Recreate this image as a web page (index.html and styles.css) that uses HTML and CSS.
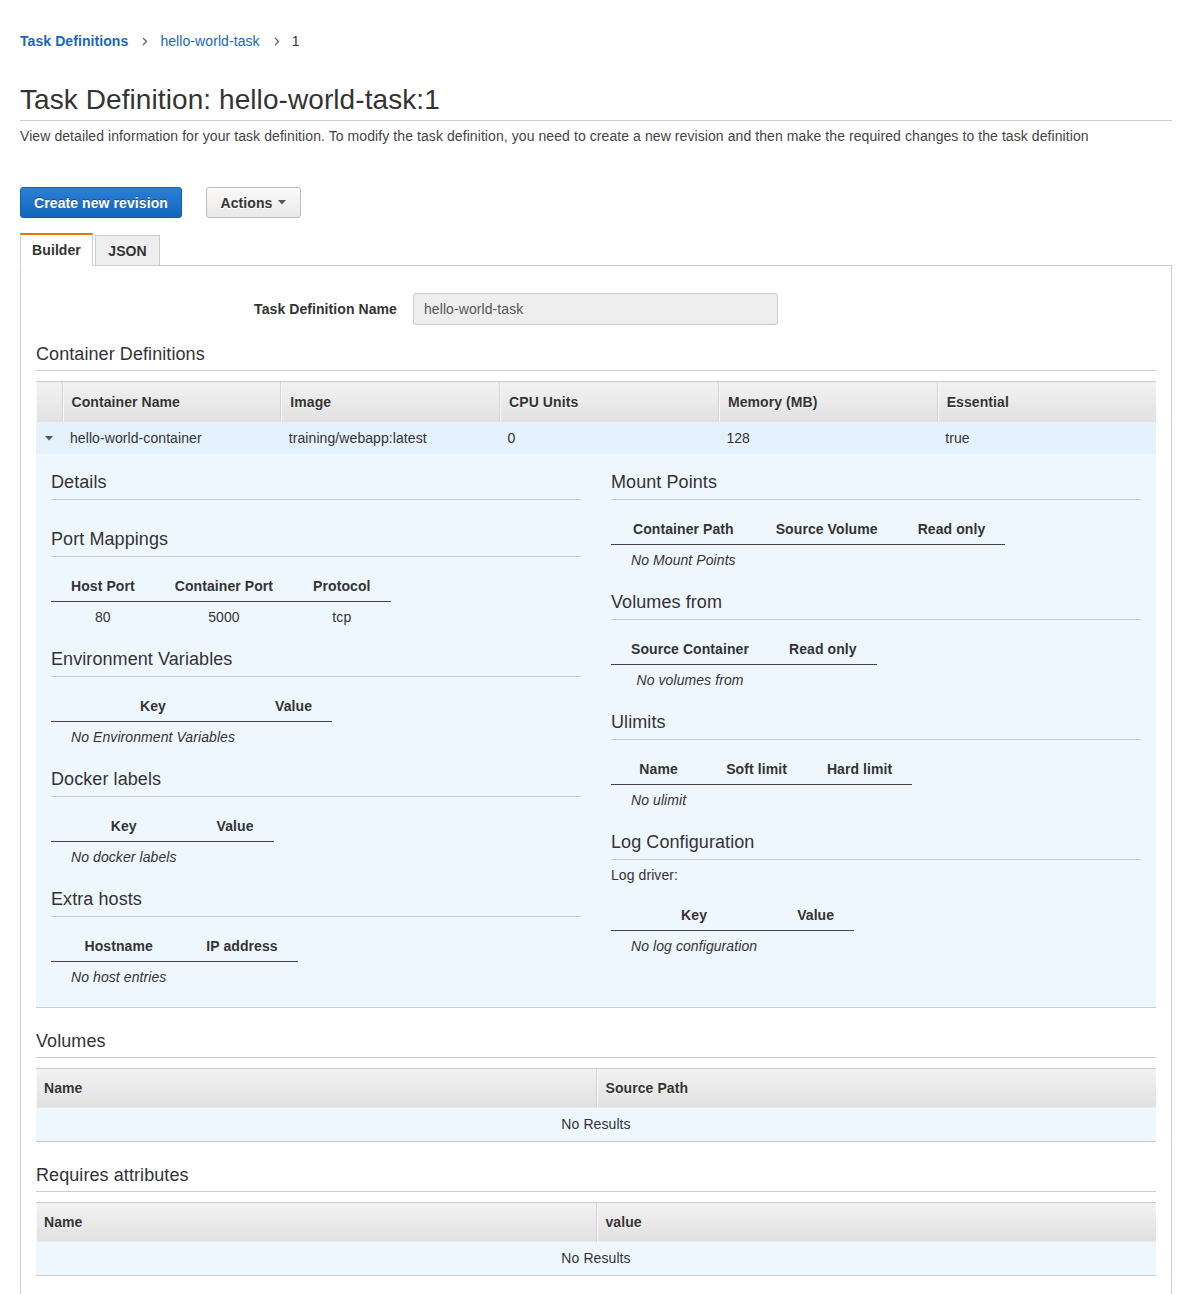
FILE: index.html
```html
<!DOCTYPE html>
<html>
<head>
<meta charset="utf-8">
<title>Task Definition</title>
<link rel="stylesheet" href="styles.css">
</head>
<body>
<div class="page">
  <nav class="crumbs">
    <a class="crumb strong" href="#">Task Definitions</a>
    <svg class="chev" width="6" height="9" viewBox="0 0 6 9"><path d="M1 1l3.5 3.5L1 8" fill="none" stroke="#666" stroke-width="1.3"/></svg>
    <a class="crumb" href="#">hello-world-task</a>
    <svg class="chev" width="6" height="9" viewBox="0 0 6 9"><path d="M1 1l3.5 3.5L1 8" fill="none" stroke="#666" stroke-width="1.3"/></svg>
    <span class="crumb-cur">1</span>
  </nav>

  <h1 class="title">Task Definition: hello-world-task:1</h1>
  <p class="desc">View detailed information for your task definition. To modify the task definition, you need to create a new revision and then make the required changes to the task definition</p>

  <div class="actions">
    <button class="btn btn-primary">Create new revision</button>
    <button class="btn btn-default">Actions <svg class="caret" width="8" height="5" viewBox="0 0 8 5"><path d="M0 0h8L4 4.5z" fill="#555"/></svg></button>
  </div>

  <div class="tabs">
    <div class="tab active">Builder</div>
    <div class="tab">JSON</div>
  </div>

  <div class="panel">
    <div class="name-row">
      <label class="name-label">Task Definition Name</label>
      <div class="name-input">hello-world-task</div>
    </div>

    <h2 class="sec-title">Container Definitions</h2>
    <table class="grid-table containers">
      <thead>
        <tr>
          <th class="c-toggle"></th>
          <th>Container Name</th>
          <th>Image</th>
          <th>CPU Units</th>
          <th>Memory (MB)</th>
          <th>Essential</th>
        </tr>
      </thead>
      <tbody>
        <tr class="sel-row">
          <td class="c-toggle"><svg width="8" height="5" viewBox="0 0 8 5"><path d="M0 0h8L4 4.5z" fill="#555"/></svg></td>
          <td>hello-world-container</td>
          <td>training/webapp:latest</td>
          <td>0</td>
          <td>128</td>
          <td>true</td>
        </tr>
        <tr class="detail-row">
          <td colspan="6">
            <div class="detail">
              <div class="col">
                <section class="sub">
                  <h3 class="sub-title">Details</h3>
                  <div class="empty-block"></div>
                </section>
                <section class="sub">
                  <h3 class="sub-title">Port Mappings</h3>
                  <table class="mini">
                    <thead><tr><th>Host Port</th><th>Container Port</th><th>Protocol</th></tr></thead>
                    <tbody><tr><td>80</td><td>5000</td><td>tcp</td></tr></tbody>
                  </table>
                </section>
                <section class="sub">
                  <h3 class="sub-title">Environment Variables</h3>
                  <table class="mini">
                    <thead><tr><th>Key</th><th>Value</th></tr></thead>
                    <tbody><tr><td class="none">No Environment Variables</td><td></td></tr></tbody>
                  </table>
                </section>
                <section class="sub">
                  <h3 class="sub-title">Docker labels</h3>
                  <table class="mini">
                    <thead><tr><th>Key</th><th>Value</th></tr></thead>
                    <tbody><tr><td class="none">No docker labels</td><td></td></tr></tbody>
                  </table>
                </section>
                <section class="sub">
                  <h3 class="sub-title">Extra hosts</h3>
                  <table class="mini">
                    <thead><tr><th>Hostname</th><th>IP address</th></tr></thead>
                    <tbody><tr><td class="none">No host entries</td><td></td></tr></tbody>
                  </table>
                </section>
              </div>
              <div class="col">
                <section class="sub">
                  <h3 class="sub-title">Mount Points</h3>
                  <table class="mini">
                    <thead><tr><th>Container Path</th><th>Source Volume</th><th>Read only</th></tr></thead>
                    <tbody><tr><td class="none">No Mount Points</td><td></td><td></td></tr></tbody>
                  </table>
                </section>
                <section class="sub">
                  <h3 class="sub-title">Volumes from</h3>
                  <table class="mini">
                    <thead><tr><th>Source Container</th><th>Read only</th></tr></thead>
                    <tbody><tr><td class="none">No volumes from</td><td></td></tr></tbody>
                  </table>
                </section>
                <section class="sub">
                  <h3 class="sub-title">Ulimits</h3>
                  <table class="mini">
                    <thead><tr><th>Name</th><th>Soft limit</th><th>Hard limit</th></tr></thead>
                    <tbody><tr><td class="none">No ulimit</td><td></td><td></td></tr></tbody>
                  </table>
                </section>
                <section class="sub">
                  <h3 class="sub-title">Log Configuration</h3>
                  <div class="log-driver">Log driver:</div>
                  <table class="mini log">
                    <thead><tr><th>Key</th><th>Value</th></tr></thead>
                    <tbody><tr><td class="none">No log configuration</td><td></td></tr></tbody>
                  </table>
                </section>
              </div>
            </div>
          </td>
        </tr>
      </tbody>
    </table>

    <h2 class="sec-title spaced">Volumes</h2>
    <table class="grid-table half">
      <thead><tr><th>Name</th><th>Source Path</th></tr></thead>
      <tbody><tr class="noresults"><td colspan="2">No Results</td></tr></tbody>
    </table>

    <h2 class="sec-title spaced">Requires attributes</h2>
    <table class="grid-table half">
      <thead><tr><th>Name</th><th>value</th></tr></thead>
      <tbody><tr class="noresults"><td colspan="2">No Results</td></tr></tbody>
    </table>
    <div class="panel-tail"></div>
  </div>
</div>
</body>
</html>
```

FILE: styles.css
```css
* { box-sizing: border-box; }

html, body {
  margin: 0;
  padding: 0;
  background: #fff;
}

body {
  font-family: "Liberation Sans", Arial, Helvetica, sans-serif;
  font-size: 14px;
  line-height: 20px;
  color: #444;
  letter-spacing: 0.08px;
}

.page {
  padding: 31px 29px 0 20px;
}

/* breadcrumbs */
.crumbs {
  display: flex;
  align-items: center;
  height: 20px;
}
.crumb {
  color: #1667bf;
  text-decoration: none;
}
.crumb.strong {
  font-weight: bold;
}
.chev {
  margin: 0 12px 0 14px;
}
.crumb-cur {
  color: #333;
}

/* title */
.title {
  margin: 32px 0 0;
  font-size: 28px;
  line-height: 34px;
  font-weight: normal;
  color: #333;
  padding-bottom: 3px;
  border-bottom: 1px solid #ccc;
}
.desc {
  margin: 5px 0 0;
  color: #444;
}

/* buttons */
.actions {
  display: flex;
  gap: 24px;
  margin-top: 41px;
}
.btn {
  font-family: inherit;
  font-size: 14px;
  font-weight: bold;
  letter-spacing: 0.08px;
  height: 31px;
  border-radius: 3px;
  padding: 0;
  white-space: nowrap;
  display: inline-flex;
  align-items: center;
  justify-content: center;
  cursor: pointer;
}
.btn-primary {
  width: 162px;
  color: #fff;
  background: linear-gradient(#2a7fd6, #1266bb);
  border: 1px solid #1160b0;
  text-shadow: 0 -1px 0 rgba(0,0,0,0.35);
}
.btn-default {
  width: 95px;
  color: #333;
  background: linear-gradient(#fafafa, #e9e9e9);
  border: 1px solid #bcbcbc;
  text-shadow: 0 1px 0 #fff;
}
.caret {
  margin-left: 6px;
}

/* tabs */
.tabs {
  display: flex;
  gap: 2px;
  margin-top: 15px;
  position: relative;
  z-index: 1;
  margin-bottom: -1px;
  align-items: flex-end;
}
.tab {
  font-weight: bold;
  color: #333;
  padding: 0;
  height: 31px;
  line-height: 30px;
  border: 1px solid #ccc;
  background: #eee;
  text-align: center;
}
.tab.active {
  height: 33px;
  background: #fff;
  border-top: 2px solid #e07800;
  border-bottom-color: #fff;
  line-height: 31px;
  width: 73px;
}
.tab:not(.active) {
  width: 65px;
  border-bottom-color: #ccc;
}

/* panel */
.panel {
  border: 1px solid #ccc;
  border-bottom: none;
  padding: 27px 15px 0;
}

.name-row {
  display: grid;
  grid-template-columns: 361px 365px;
  column-gap: 16px;
  align-items: center;
}
.name-label {
  text-align: right;
  font-weight: bold;
  color: #333;
}
.name-input {
  height: 32px;
  line-height: 30px;
  padding: 0 10px;
  background: #eee;
  border: 1px solid #ccc;
  border-radius: 3px;
  color: #555;
}

.sec-title {
  margin: 18px 0 0;
  font-size: 18px;
  line-height: 22px;
  font-weight: normal;
  color: #333;
  padding-bottom: 5px;
  border-bottom: 1px solid #ccc;
}
.sec-title.spaced {
  margin-top: 22px;
}

/* big tables */
.grid-table {
  width: 100%;
  border-collapse: collapse;
  margin-top: 10px;
  table-layout: fixed;
}
.grid-table > thead > tr > th {
  height: 40px;
  border-top: 1px solid #ccc;
  background: linear-gradient(#f2f2f2, #e1e1e1);
  text-align: left;
  font-weight: bold;
  color: #333;
  text-shadow: 0 1px 0 #fff;
  padding: 0 9px;
  border-left: 1px solid #d4d4d4;
  box-shadow: inset 1px 0 0 #f7f7f7;
}
.grid-table > thead > tr > th:first-child {
  border-left: none;
  padding-left: 8px;
}
.containers > thead > tr > th.c-toggle {
  width: 26px;
  padding: 0;
}
.containers > thead > tr > th:nth-child(2) {
  padding-left: 9px;
}
.sel-row td {
  background: #e5f1fc;
  height: 32px;
  padding: 0 8px;
  color: #333;
}
.sel-row td.c-toggle {
  padding: 0 0 0 9px;
}
.sel-row td.c-toggle svg {
  display: block;
  margin-top: 1px;
}
.detail-row > td {
  padding: 0;
  background: #eff7fe;
  border-bottom: 1px solid #ccc;
}

.detail {
  display: grid;
  grid-template-columns: 1fr 1fr;
  column-gap: 30px;
  padding: 17px 15px 0;
}

.sub-title {
  margin: 0;
  font-size: 18px;
  line-height: 22px;
  font-weight: normal;
  color: #333;
  padding-bottom: 6px;
  border-bottom: 1px solid #ccc;
}
.sub {
  margin-bottom: 16px;
}
.sub:last-child {
  margin-bottom: 15px;
}
.empty-block {
  height: 12px;
}

.mini {
  border-collapse: collapse;
  margin-top: 14px;
}
.mini.log {
  margin-top: 15px;
}
.mini th {
  font-weight: bold;
  color: #333;
  padding: 5px 20px;
  line-height: 20px;
  text-align: center;
  white-space: nowrap;
  border-bottom: 1px solid #444;
}
.mini td {
  padding: 5px 20px;
  line-height: 20px;
  text-align: center;
  color: #333;
  white-space: nowrap;
}
.mini td.none {
  font-style: italic;
}
.log-driver {
  margin-top: 5px;
  color: #333;
}

.noresults td {
  height: 33px;
  background: #eff7fe;
  border-bottom: 1px solid #ccc;
  text-align: center;
  color: #333;
}

.panel-tail {
  height: 40px;
}
```
